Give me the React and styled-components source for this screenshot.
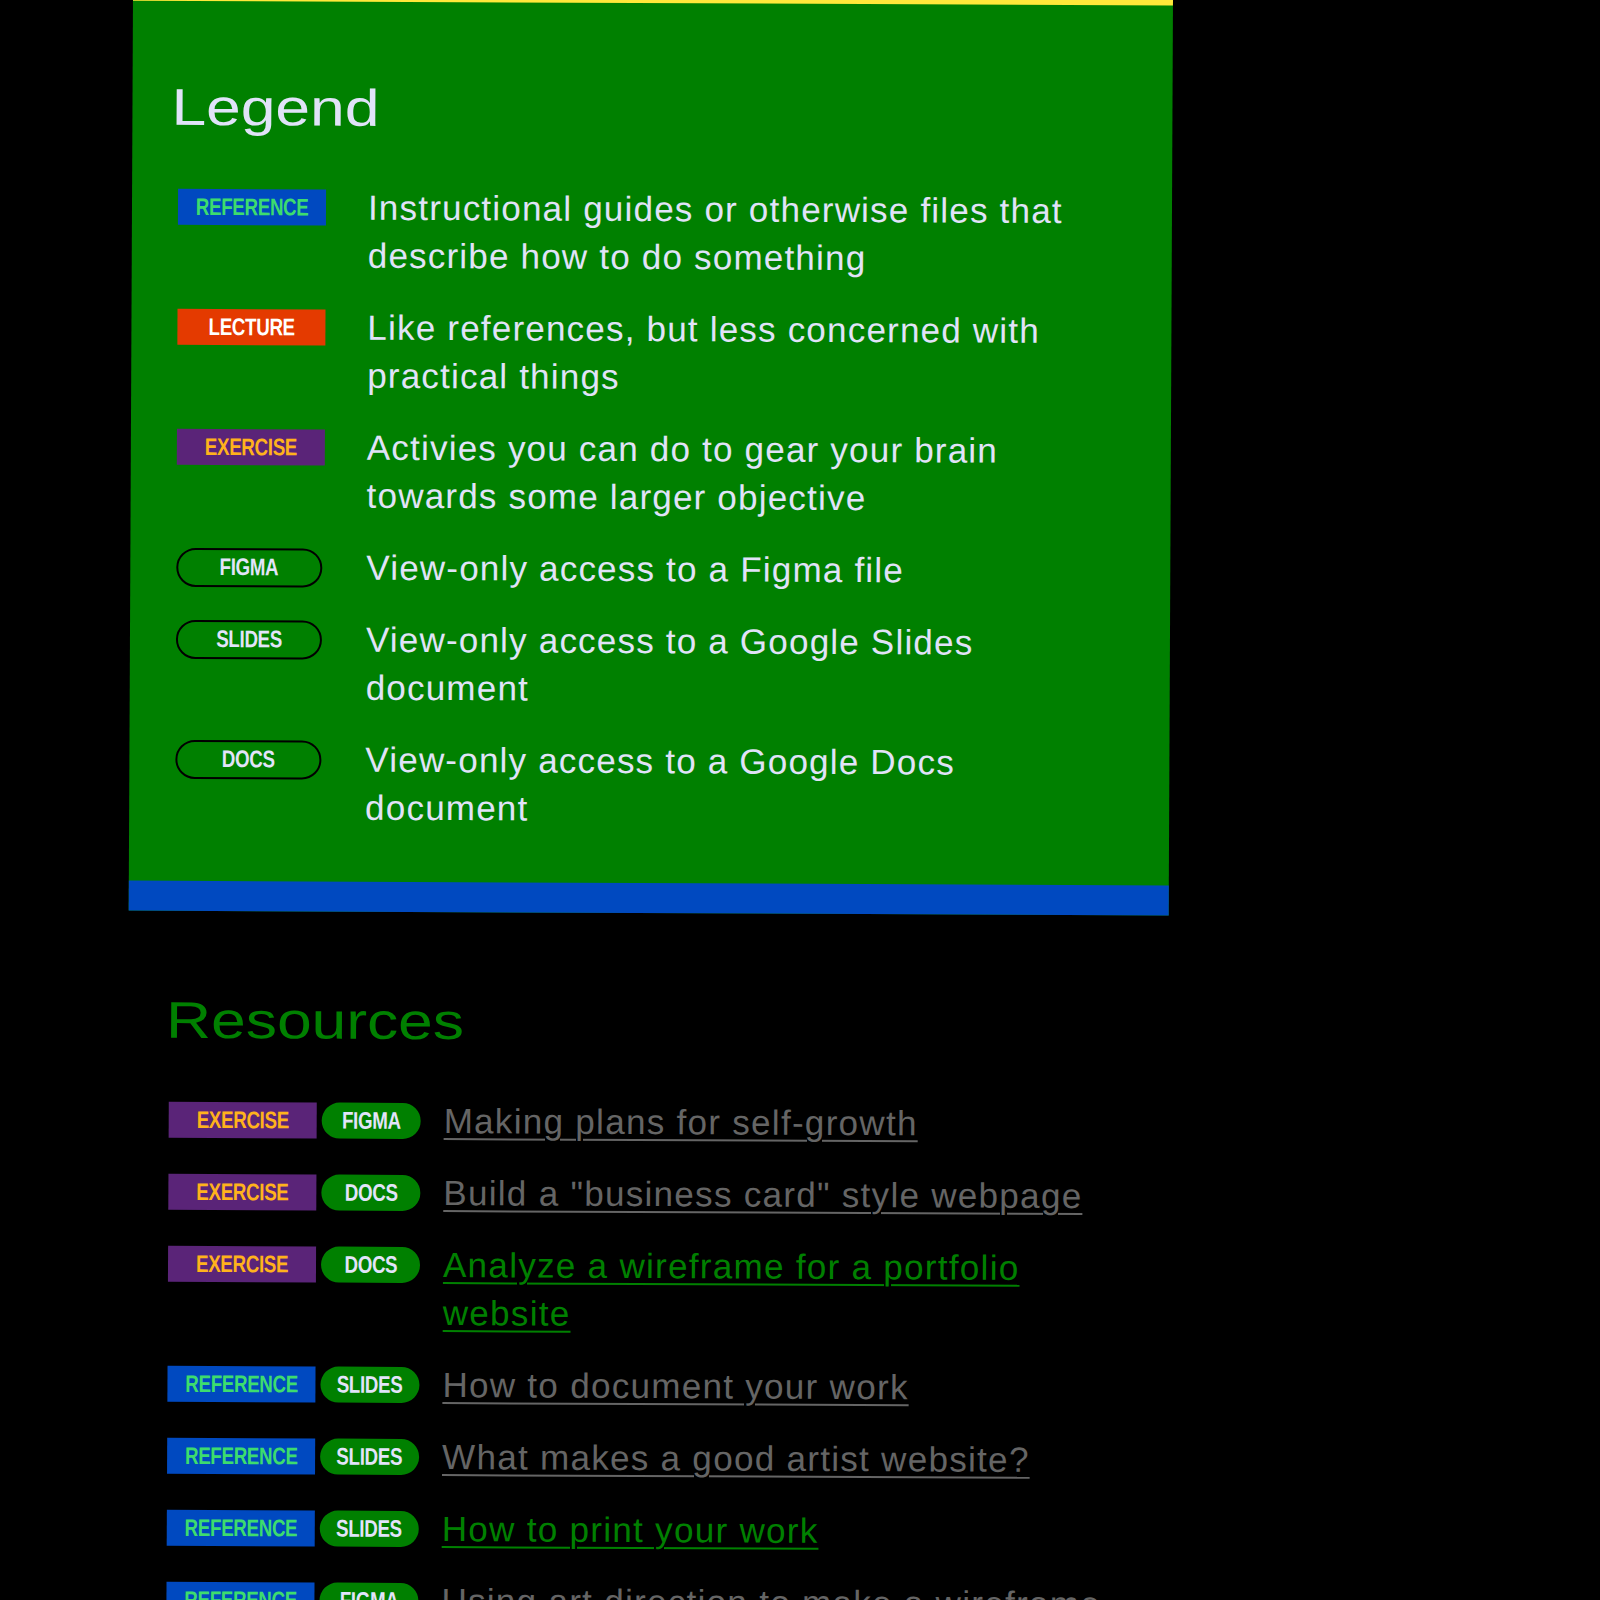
import React from "react";
import styled, { createGlobalStyle } from "styled-components";

const GlobalStyle = createGlobalStyle`
  html, body {
    margin: 0;
    padding: 0;
    background: #000;
    overflow: hidden;
  }
  body {
    font-family: "Liberation Sans", Arial, sans-serif;
  }
`;

const Page = styled.div`
  padding-left: 133px;
  width: 1040px;
  transform: rotate(0.27deg);
  transform-origin: 0 0;
`;

const LegendPanel = styled.section`
  margin-top: -6px;
  border-top: 6px solid #ffe83a;
  border-bottom: 30px solid #0049c0;
  background: #008000;
  padding: 77px 40px 50px 39px;
`;

const Heading = styled.h2`
  margin: 0;
  font-family: "Liberation Sans", Arial, sans-serif;
  font-weight: 400;
  font-size: 51.5px;
  line-height: 59px;
  color: ${(p) => p.$color};
  display: block;
  span {
    display: inline-block;
    transform: scaleX(1.21);
    transform-origin: 0 50%;
  }
`;

const LegendList = styled.div`
  margin-top: 46px;
  padding-left: 7px;
  display: flex;
  flex-direction: column;
  gap: 24px;
`;

const LegendRow = styled.div`
  display: grid;
  grid-template-columns: 148px 1fr;
  column-gap: 42px;
  align-items: start;
`;

const BadgeSlot = styled.div`
  height: 48px;
  display: flex;
  align-items: center;
`;

const tagColors = {
  REFERENCE: { bg: "#0049c0", fg: "#3ddc6e" },
  LECTURE: { bg: "#e43a00", fg: "#ffffff" },
  EXERCISE: { bg: "#5a2478", fg: "#ffb21c" },
};

const Label = styled.span`
  display: inline-block;
  font-family: "Liberation Sans", Arial, sans-serif;
  font-weight: 700;
  font-size: 24px;
  line-height: 1;
  letter-spacing: -0.4px;
  transform: scaleX(0.78);
  white-space: nowrap;
`;

const Tag = styled.span`
  display: inline-flex;
  align-items: center;
  justify-content: center;
  box-sizing: border-box;
  width: 148px;
  height: 36px;
  background: ${(p) => tagColors[p.$kind].bg};
  color: ${(p) => tagColors[p.$kind].fg};
`;

const Pill = styled.span`
  display: inline-flex;
  align-items: center;
  justify-content: center;
  box-sizing: border-box;
  width: ${(p) => (p.$outline ? "146px" : "99px")};
  height: ${(p) => (p.$outline ? "39px" : "36px")};
  border-radius: 20px;
  background: ${(p) => (p.$outline ? "transparent" : "#008000")};
  border: ${(p) => (p.$outline ? "2px solid #000" : "none")};
  color: #e2e4fa;
`;

const Description = styled.p`
  margin: 0;
  max-width: 730px;
  font-size: 35px;
  line-height: 48px;
  letter-spacing: 1.2px;
  color: #e0e3f8;
`;

const Resources = styled.section`
  margin-top: 80px;
  padding-left: 38px;
  padding-right: 40px;
`;

const ResourceList = styled.div`
  margin-top: 46px;
  padding-left: 3px;
  display: flex;
  flex-direction: column;
  gap: 24px;
`;

const ResourceRow = styled.div`
  display: grid;
  grid-template-columns: 148px 99px 1fr;
  column-gap: 5px;
  align-items: start;
`;

const LinkSlot = styled.div`
  padding-left: 18px;
`;

const ResourceLink = styled.a`
  font-size: 35px;
  line-height: 48px;
  letter-spacing: 1.3px;
  color: ${(p) => (p.$visited ? "#008000" : "#656565")};
  text-decoration: underline;
  text-decoration-thickness: 2px;
  text-underline-offset: 5px;
  cursor: pointer;
`;

const legend = [
  { kind: "tag", label: "REFERENCE", text: "Instructional guides or otherwise files that describe how to do something" },
  { kind: "tag", label: "LECTURE", text: "Like references, but less concerned with practical things" },
  { kind: "tag", label: "EXERCISE", text: "Activies you can do to gear your brain towards some larger objective" },
  { kind: "pill", label: "FIGMA", text: "View-only access to a Figma file" },
  { kind: "pill", label: "SLIDES", text: "View-only access to a Google Slides document" },
  { kind: "pill", label: "DOCS", text: "View-only access to a Google Docs document" },
];

const resources = [
  { tag: "EXERCISE", pill: "FIGMA", title: "Making plans for self-growth" },
  { tag: "EXERCISE", pill: "DOCS", title: 'Build a "business card" style webpage' },
  { tag: "EXERCISE", pill: "DOCS", title: "Analyze a wireframe for a portfolio website", visited: true },
  { tag: "REFERENCE", pill: "SLIDES", title: "How to document your work" },
  { tag: "REFERENCE", pill: "SLIDES", title: "What makes a good artist website?" },
  { tag: "REFERENCE", pill: "SLIDES", title: "How to print your work", visited: true },
  { tag: "REFERENCE", pill: "FIGMA", title: "Using art direction to make a wireframe" },
];

export default function App() {
  return (
    <>
      <GlobalStyle />
      <Page>
        <LegendPanel>
          <Heading $color="#e0e3f8">
            <span>Legend</span>
          </Heading>
          <LegendList>
            {legend.map((item) => (
              <LegendRow key={item.label}>
                <BadgeSlot>
                  {item.kind === "tag" ? (
                    <Tag $kind={item.label}>
                      <Label>{item.label}</Label>
                    </Tag>
                  ) : (
                    <Pill $outline>
                      <Label>{item.label}</Label>
                    </Pill>
                  )}
                </BadgeSlot>
                <Description>{item.text}</Description>
              </LegendRow>
            ))}
          </LegendList>
        </LegendPanel>
        <Resources>
          <Heading $color="#008000">
            <span>Resources</span>
          </Heading>
          <ResourceList>
            {resources.map((r) => (
              <ResourceRow key={r.title}>
                <BadgeSlot>
                  <Tag $kind={r.tag}>
                    <Label>{r.tag}</Label>
                  </Tag>
                </BadgeSlot>
                <BadgeSlot>
                  <Pill>
                    <Label>{r.pill}</Label>
                  </Pill>
                </BadgeSlot>
                <LinkSlot>
                  <ResourceLink $visited={r.visited}>{r.title}</ResourceLink>
                </LinkSlot>
              </ResourceRow>
            ))}
          </ResourceList>
        </Resources>
      </Page>
    </>
  );
}
